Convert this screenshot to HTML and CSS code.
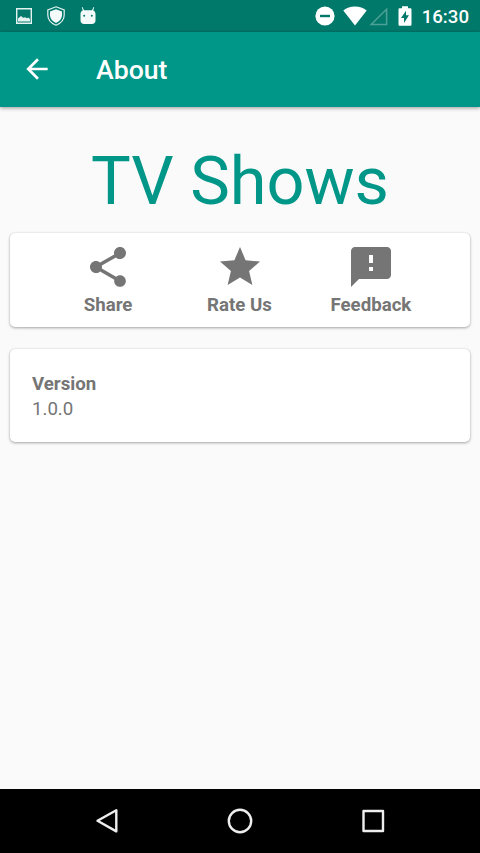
FILE: index.html
```html
<!DOCTYPE html>
<html lang="en">
<head>
<meta charset="utf-8">
<title>About</title>
<link rel="stylesheet" href="styles.css">
</head>
<body>
<div class="screen">
  <div class="status">
    <div class="notifications">
      <svg width="16" height="16" viewBox="0 0 16 16"><path fill="none" stroke="#e4f3f1" stroke-width="1.4" d="M.7.7h14.6v14.6H.7z"/><path fill="#e4f3f1" d="M2 13.500V10.500l3-2.500 2.200 1.800L9 9.200l2 1 1.200-.7 1.800 1.600v2.400z"/></svg>
      <svg width="18" height="20" viewBox="0 0 18 20"><path fill="none" stroke="#e4f3f1" stroke-width="1.200" d="M9 .8 17.200 4v5c0 4.500-3 8.200-8.200 10.200C3.800 17.200.8 13.500.8 9V4z"/><path fill="#f4fbfa" d="M9 3.200 15 5.500V9.300c0 3.200-2.300 6-6 7.600-3.700-1.600-6-4.400-6-7.600V5.500z"/></svg>
      <svg width="16" height="20" viewBox="0 0 16 20"><path fill="#f4fbfa" d="M2.500 1 4 4.200h8L13.500 1l.7.3-1 3.200C14.800 5 15.500 6.500 15.500 8v6.500c0 2-1.500 3.500-3.500 3.500H4c-2 0-3.500-1.500-3.500-3.500V8c0-1.500.7-3 2.300-3.500l-1-3.200z"/><circle cx="4.200" cy="9.800" r="1" fill="#00796b"/><circle cx="11.800" cy="9.800" r="1" fill="#00796b"/></svg>
    </div>
    <div class="system">
      <svg width="20" height="20" viewBox="0 0 20 20"><circle cx="10" cy="10" r="9.600" fill="#fff"/><path fill="#00796b" d="M5 8.800h10v2.400H5z"/></svg>
      <svg class="wifi" width="24" height="20" viewBox="0 0 24 20"><path fill="#fff" d="M12 19.500.3 4.400C3.500 1.800 7.500.5 12 .5s8.500 1.300 11.700 3.900z"/></svg>
      <svg class="signal" width="19" height="19" viewBox="0 0 19 19"><path fill="none" stroke="#4da196" stroke-width="1.500" d="M17.600 2.200v15.200H2.200z"/></svg>
      <svg class="battery" width="14" height="20" viewBox="0 0 14 20"><path fill="#fff" d="M4 .3h6v2h2.200c.8 0 1.300.5 1.300 1.300v14.800c0 .8-.5 1.300-1.300 1.300H1.800c-.8 0-1.300-.5-1.300-1.300V3.600c0-.8.500-1.300 1.300-1.300H4z"/><path fill="#00796b" d="M8 4.800v4.500h3L6 17v-5H3z"/></svg>
      <span class="clock">16:30</span>
    </div>
  </div>
  <header class="toolbar">
    <svg width="32" height="32" viewBox="0 0 24 24"><path fill="#fff" d="M20 11H7.830l5.590-5.590L12 4l-8 8 8 8 1.410-1.410L7.830 13H20v-2z"/></svg>
    <h1 class="title">About</h1>
  </header>
  <main class="content">
    <div class="app-name">TV Shows</div>
    <section class="card actions">
      <div class="action">
        <svg width="48" height="48" viewBox="0 0 24 24"><path d="M18 16.080c-.76 0-1.440.3-1.960.77L8.910 12.700c.05-.23.09-.46.09-.7s-.04-.47-.09-.7l7.050-4.110c.54.5 1.250.81 2.040.81 1.660 0 3-1.340 3-3s-1.340-3-3-3-3 1.340-3 3c0 .24.04.47.09.7L8.040 9.810C7.500 9.310 6.790 9 6 9c-1.660 0-3 1.340-3 3s1.340 3 3 3c.79 0 1.500-.31 2.040-.81l7.120 4.160c-.05.21-.08.43-.08.65 0 1.610 1.310 2.920 2.920 2.920s2.920-1.310 2.920-2.920-1.310-2.920-2.920-2.920z"/></svg>
        <span>Share</span>
      </div>
      <div class="action">
        <svg width="48" height="48" viewBox="0 0 24 24"><path d="M12 17.270 18.180 21l-1.640-7.030L22 9.240l-7.190-.61L12 2 9.190 8.630 2 9.240l5.460 4.730L5.820 21z"/></svg>
        <span>Rate Us</span>
      </div>
      <div class="action">
        <svg width="48" height="48" viewBox="0 0 24 24"><path d="M20 2H4c-1.100 0-1.990.9-1.990 2L2 22l4-4h14c1.100 0 2-.9 2-2V4c0-1.100-.9-2-2-2zm-7 12h-2v-2h2v2zm0-4h-2V6h2v4z"/></svg>
        <span>Feedback</span>
      </div>
    </section>
    <section class="card version">
      <strong>Version</strong>
      <span>1.0.0</span>
    </section>
  </main>
  <nav class="navbar">
    <svg width="28" height="28" viewBox="0 0 28 28"><path d="M23.300 3.200v21.200L4.500 13.800z"/></svg>
    <svg width="28" height="28" viewBox="0 0 28 28"><circle cx="14" cy="14" r="11.200"/></svg>
    <svg width="28" height="28" viewBox="0 0 28 28"><path d="M3.500 4h19.500v20H3.500z"/></svg>
  </nav>
</div>
</body>
</html>
```
FILE: styles.css
```css
* {
  box-sizing: border-box;
}

body {
  margin: 0;
  font-family: Roboto, "Liberation Sans", sans-serif;
  background: #fafafa;
}

svg {
  display: block;
  flex: none;
}

.screen {
  display: flex;
  flex-direction: column;
  width: 480px;
  height: 853px;
}

.status {
  display: flex;
  justify-content: space-between;
  height: 32px;
  padding: 0 11px 0 16px;
  background: #00796b;
}

.notifications,
.system {
  display: flex;
  align-items: center;
}

.notifications {
  gap: 15px;
}

.wifi {
  margin-left: 8px;
}

.signal {
  margin-left: 2px;
}

.battery {
  margin: 0 9.5px 0 10.5px;
}

.clock {
  color: #fff;
  font-size: 18.67px;
  font-weight: 500;
  line-height: 32px;
  padding-top: 1px;
}

.toolbar {
  display: flex;
  align-items: center;
  gap: 43px;
  height: 75px;
  padding: 0 0 1px 21px;
  background: #009688;
  box-shadow: 0 1px 4px rgba(0, 0, 0, .4);
}

.title {
  margin: 0;
  padding-top: 1px;
  color: #fff;
  font-size: 26.67px;
  font-weight: 500;
  line-height: 32px;
}

.content {
  display: flex;
  flex: 1;
  flex-direction: column;
  padding: 35px 10.4px 0;
}

.app-name {
  height: 78px;
  margin-bottom: 13px;
  color: #009688;
  font-size: 66.67px;
  line-height: 78px;
  text-align: center;
}

.card {
  height: 94px;
  margin-bottom: 22px;
  border-radius: 5px;
  background: #fff;
  box-shadow: 0 1px 3px rgba(0, 0, 0, .34), 0 0 1px rgba(0, 0, 0, .12);
  color: #757575;
  font-size: 18.67px;
}

.actions {
  display: flex;
  padding: 10px 33px 0 32px;
}

.action {
  display: flex;
  flex: 1;
  flex-direction: column;
  align-items: center;
  font-weight: 700;
  line-height: 29px;
}

.action svg {
  fill: #757575;
}

.version {
  display: flex;
  flex-direction: column;
  height: 93px;
  padding: 23px 21.6px 0;
  line-height: 25px;
}

.navbar {
  display: flex;
  justify-content: center;
  gap: 105.5px;
  height: 64px;
  padding-top: 18px;
  background: #000;
}

.navbar svg {
  fill: none;
  stroke: #eee;
  stroke-width: 2.4;
  stroke-linejoin: round;
}
```
